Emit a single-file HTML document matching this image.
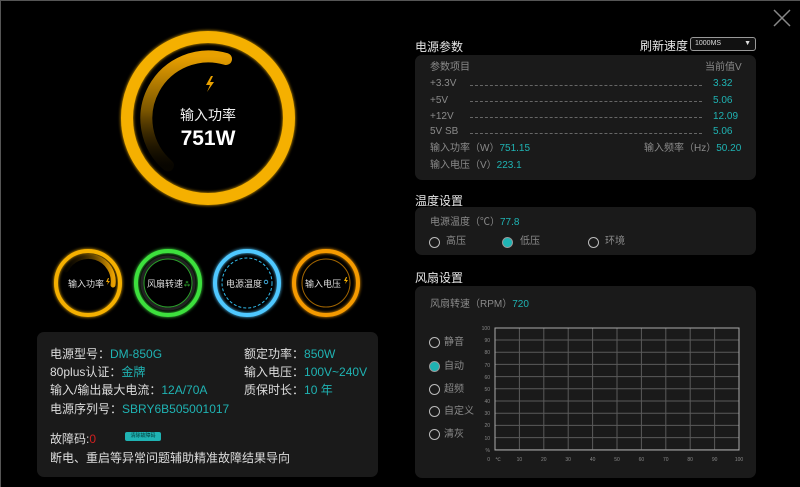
<!DOCTYPE html>
<html><head><meta charset="utf-8"><style>
*{margin:0;padding:0;box-sizing:border-box}
body{width:800px;height:487px;background:#000;position:relative;overflow:hidden;font-family:"Liberation Sans","Noto Sans CJK SC",sans-serif;color:#ccc}
.a{position:absolute;white-space:nowrap}
.card{position:absolute;background:#1a1a1a;border-radius:7px}
.t{color:#1fb3b3}
.h{font-size:12px;color:#e6e6e6}
.g{color:#8a8a8a;font-size:10px;line-height:12px}
.dash{position:absolute;border-top:1px dashed #666;height:0}
.rad{position:absolute;width:11px;height:11px;border:1.5px solid #bbb;border-radius:50%}
.rad.on{background:#1fb3b3;border-color:#999}
.lbl{font-size:12px;color:#ddd}
.v{color:#1fb3b3}
</style></head><body>
<div class="a" style="left:0;top:0;width:800px;height:1px;background:#555"></div>
<div class="a" style="left:0;top:0;width:1px;height:487px;background:#555"></div>

<svg class="a" style="left:0;top:0" width="400" height="330">
<defs>
<linearGradient id="ag" x1="0" y1="0" x2="0" y2="1"><stop offset="0" stop-color="#e8a000"/><stop offset="0.5" stop-color="#7a5500"/><stop offset="1" stop-color="#1a1200" stop-opacity="0.3"/></linearGradient>
<linearGradient id="ag2" x1="1" y1="0" x2="0" y2="0"><stop offset="0" stop-color="#e8a000"/><stop offset="1" stop-color="#1a1200" stop-opacity="0.2"/></linearGradient>
<filter id="gl"><feGaussianBlur stdDeviation="1.5" result="b"/><feMerge><feMergeNode in="b"/><feMergeNode in="SourceGraphic"/></feMerge></filter>
</defs>
<circle cx="208" cy="118" r="81" fill="none" stroke="#f5b000" stroke-width="12" filter="url(#gl)"/>
<path d="M226 59 A62 62 0 0 0 168 165.5" fill="none" stroke="url(#ag)" stroke-width="12" stroke-linecap="round"/>
<path d="M211 76 l-5 9 h4 l-3 7 l7 -10 h-4 l3 -6z" fill="#e8a000"/>
<text x="208" y="120" text-anchor="middle" fill="#eee" font-size="14" font-family="Liberation Sans,Noto Sans CJK SC,sans-serif">输入功率</text>
<text x="208" y="145" text-anchor="middle" fill="#fff" font-size="21" font-weight="bold" font-family="Liberation Sans,sans-serif">751W</text>

<circle cx="88" cy="283" r="32" fill="none" stroke="#f5b000" stroke-width="4" filter="url(#gl)"/>
<path d="M113 285 A25 25 0 0 0 66 270" fill="none" stroke="url(#ag2)" stroke-width="5" stroke-linecap="round"/>
<text x="86" y="287" text-anchor="middle" fill="#ddd" font-size="9" font-family="Noto Sans CJK SC,sans-serif">输入功率</text>
<path d="M108 278 l-2 4 h2 l-1 3 l3 -4 h-2 l1 -3z" fill="#e8a000"/>

<circle cx="168" cy="283" r="32" fill="none" stroke="#3ee03e" stroke-width="4" filter="url(#gl)"/>
<circle cx="168" cy="283" r="26" fill="none" stroke="#222" stroke-width="3"/>
<circle cx="168" cy="283" r="24" fill="none" stroke="#2aa02a" stroke-width="1"/>
<text x="165" y="287" text-anchor="middle" fill="#ddd" font-size="9" font-family="Noto Sans CJK SC,sans-serif">风扇转速</text>
<text x="187" y="286" text-anchor="middle" fill="#3ee03e" font-size="7">⁂</text>

<circle cx="247" cy="283" r="32" fill="none" stroke="#4fc8ff" stroke-width="4" filter="url(#gl)"/>
<circle cx="247" cy="283" r="25" fill="none" stroke="#30b8e8" stroke-width="1" stroke-dasharray="3 2"/>
<text x="244" y="287" text-anchor="middle" fill="#ddd" font-size="9" font-family="Noto Sans CJK SC,sans-serif">电源温度</text>
<circle cx="266" cy="282" r="1.8" fill="none" stroke="#4fc8ff" stroke-width="0.8"/>

<circle cx="326" cy="283" r="32" fill="none" stroke="#f59a00" stroke-width="4" filter="url(#gl)"/>
<circle cx="326" cy="283" r="24" fill="none" stroke="#a06400" stroke-width="1"/>
<text x="323" y="287" text-anchor="middle" fill="#ddd" font-size="9" font-family="Noto Sans CJK SC,sans-serif">输入电压</text>
<path d="M346 277 l-2 4 h2 l-1 3 l3 -4 h-2 l1 -3z" fill="#f5b000"/>
</svg>

<div class="card" style="left:37px;top:332px;width:341px;height:145px"></div>
<div class="a lbl" style="left:50px;top:345px">电源型号：<span class="v">DM-850G</span></div>
<div class="a lbl" style="left:50px;top:363px">80plus认证：<span class="v">金牌</span></div>
<div class="a lbl" style="left:50px;top:381px">输入/输出最大电流：<span class="v">12A/70A</span></div>
<div class="a lbl" style="left:50px;top:400px">电源序列号：<span class="v">SBRY6B505001017</span></div>
<div class="a lbl" style="left:244px;top:345px">额定功率：<span class="v">850W</span></div>
<div class="a lbl" style="left:244px;top:363px">输入电压：<span class="v">100V~240V</span></div>
<div class="a lbl" style="left:244px;top:381px">质保时长：<span class="v">10 年</span></div>
<div class="a lbl" style="left:50px;top:430px">故障码:<span style="color:#d02020">0</span></div>
<div class="a" style="left:125px;top:432px;width:36px;height:9px;background:#1fb3b3;border-radius:2px;font-size:5px;color:#033;text-align:center;line-height:9px">清除故障码</div>
<div class="a lbl" style="left:50px;top:449px">断电、重启等异常问题辅助精准故障结果导向</div>

<svg class="a" style="left:773px;top:9px" width="18" height="18"><path d="M1 1L17 17M17 1L1 17" stroke="#888" stroke-width="1.5"/></svg>

<div class="a h" style="left:415px;top:38px">电源参数</div>
<div class="a h" style="left:640px;top:37px">刷新速度</div>
<div class="a" style="left:690px;top:37px;width:66px;height:14px;border:1px solid #999;border-radius:3px;font-size:7px;color:#ddd;padding-left:4px;line-height:12px;background:#111">1000MS<span style="position:absolute;right:4px;top:0;font-size:7px">▼</span></div>

<div class="card" style="left:415px;top:55px;width:341px;height:125px"></div>
<div class="a g" style="left:430px;top:62px">参数项目</div>
<div class="a g" style="left:705px;top:62px">当前值V</div>
<div class="a g" style="left:430px;top:78px">+3.3V</div>
<div class="a g" style="left:430px;top:95px">+5V</div>
<div class="a g" style="left:430px;top:111px">+12V</div>
<div class="a g" style="left:430px;top:126px">5V SB</div>
<div class="dash" style="left:470px;top:85px;width:232px"></div>
<div class="dash" style="left:470px;top:101px;width:232px"></div>
<div class="dash" style="left:470px;top:117px;width:232px"></div>
<div class="dash" style="left:470px;top:133px;width:232px"></div>
<div class="a t" style="left:713px;top:78px;font-size:10px;line-height:12px">3.32</div>
<div class="a t" style="left:713px;top:95px;font-size:10px;line-height:12px">5.06</div>
<div class="a t" style="left:713px;top:111px;font-size:10px;line-height:12px">12.09</div>
<div class="a t" style="left:713px;top:126px;font-size:10px;line-height:12px">5.06</div>
<div class="a g" style="left:430px;top:143px">输入功率（W）<span class="t">751.15</span></div>
<div class="a g" style="left:644px;top:143px">输入频率（Hz）<span class="t">50.20</span></div>
<div class="a g" style="left:430px;top:160px">输入电压（V）<span class="t">223.1</span></div>

<div class="a h" style="left:415px;top:192px">温度设置</div>
<div class="card" style="left:415px;top:207px;width:341px;height:48px"></div>
<div class="a g" style="left:430px;top:217px">电源温度（℃）<span class="t">77.8</span></div>
<div class="rad" style="left:429px;top:237px"></div><div class="a g" style="left:446px;top:236px">高压</div>
<div class="rad on" style="left:502px;top:237px"></div><div class="a g" style="left:520px;top:236px">低压</div>
<div class="rad" style="left:588px;top:237px"></div><div class="a g" style="left:605px;top:236px">环境</div>

<div class="a h" style="left:415px;top:269px">风扇设置</div>
<div class="card" style="left:415px;top:286px;width:341px;height:192px"></div>
<div class="a g" style="left:430px;top:299px">风扇转速（RPM）<span class="t">720</span></div>
<div class="rad" style="left:429px;top:337px"></div><div class="a g" style="left:444px;top:337px">静音</div>
<div class="rad on" style="left:429px;top:361px"></div><div class="a g" style="left:444px;top:361px">自动</div>
<div class="rad" style="left:429px;top:384px"></div><div class="a g" style="left:444px;top:384px">超频</div>
<div class="rad" style="left:429px;top:406px"></div><div class="a g" style="left:444px;top:406px">自定义</div>
<div class="rad" style="left:429px;top:429px"></div><div class="a g" style="left:444px;top:429px">清灰</div>

<svg class="a" style="left:470px;top:320px" width="280" height="150" font-family="Liberation Sans,sans-serif" font-size="5" fill="#888">
<g stroke="#5a5a5a" stroke-width="1">
<line x1="25" y1="20" x2="269" y2="20"/><line x1="25" y1="32.2" x2="269" y2="32.2"/><line x1="25" y1="44.4" x2="269" y2="44.4"/><line x1="25" y1="56.6" x2="269" y2="56.6"/><line x1="25" y1="68.8" x2="269" y2="68.8"/><line x1="25" y1="81" x2="269" y2="81"/><line x1="25" y1="93.2" x2="269" y2="93.2"/><line x1="25" y1="105.4" x2="269" y2="105.4"/><line x1="25" y1="117.6" x2="269" y2="117.6"/><line x1="25" y1="129.8" x2="269" y2="129.8"/>
<line x1="49.4" y1="8" x2="49.4" y2="130"/><line x1="73.8" y1="8" x2="73.8" y2="130"/><line x1="98.2" y1="8" x2="98.2" y2="130"/><line x1="122.6" y1="8" x2="122.6" y2="130"/><line x1="147" y1="8" x2="147" y2="130"/><line x1="171.4" y1="8" x2="171.4" y2="130"/><line x1="195.8" y1="8" x2="195.8" y2="130"/><line x1="220.2" y1="8" x2="220.2" y2="130"/><line x1="244.6" y1="8" x2="244.6" y2="130"/>
</g>
<rect x="25" y="8" width="244" height="122" fill="none" stroke="#aaa" stroke-width="1"/>
<g text-anchor="end">
<text x="20" y="10">100</text><text x="20" y="22">90</text><text x="20" y="34">80</text><text x="20" y="47">70</text><text x="20" y="59">60</text><text x="20" y="71">50</text><text x="20" y="83">40</text><text x="20" y="95">30</text><text x="20" y="107">20</text><text x="20" y="120">10</text><text x="20" y="132">%</text><text x="20" y="141">0</text>
</g>
<g text-anchor="middle">
<text x="28" y="141">℃</text><text x="49.4" y="141">10</text><text x="73.8" y="141">20</text><text x="98.2" y="141">30</text><text x="122.6" y="141">40</text><text x="147" y="141">50</text><text x="171.4" y="141">60</text><text x="195.8" y="141">70</text><text x="220.2" y="141">80</text><text x="244.6" y="141">90</text><text x="269" y="141">100</text>
</g>
</svg>
</body></html>
